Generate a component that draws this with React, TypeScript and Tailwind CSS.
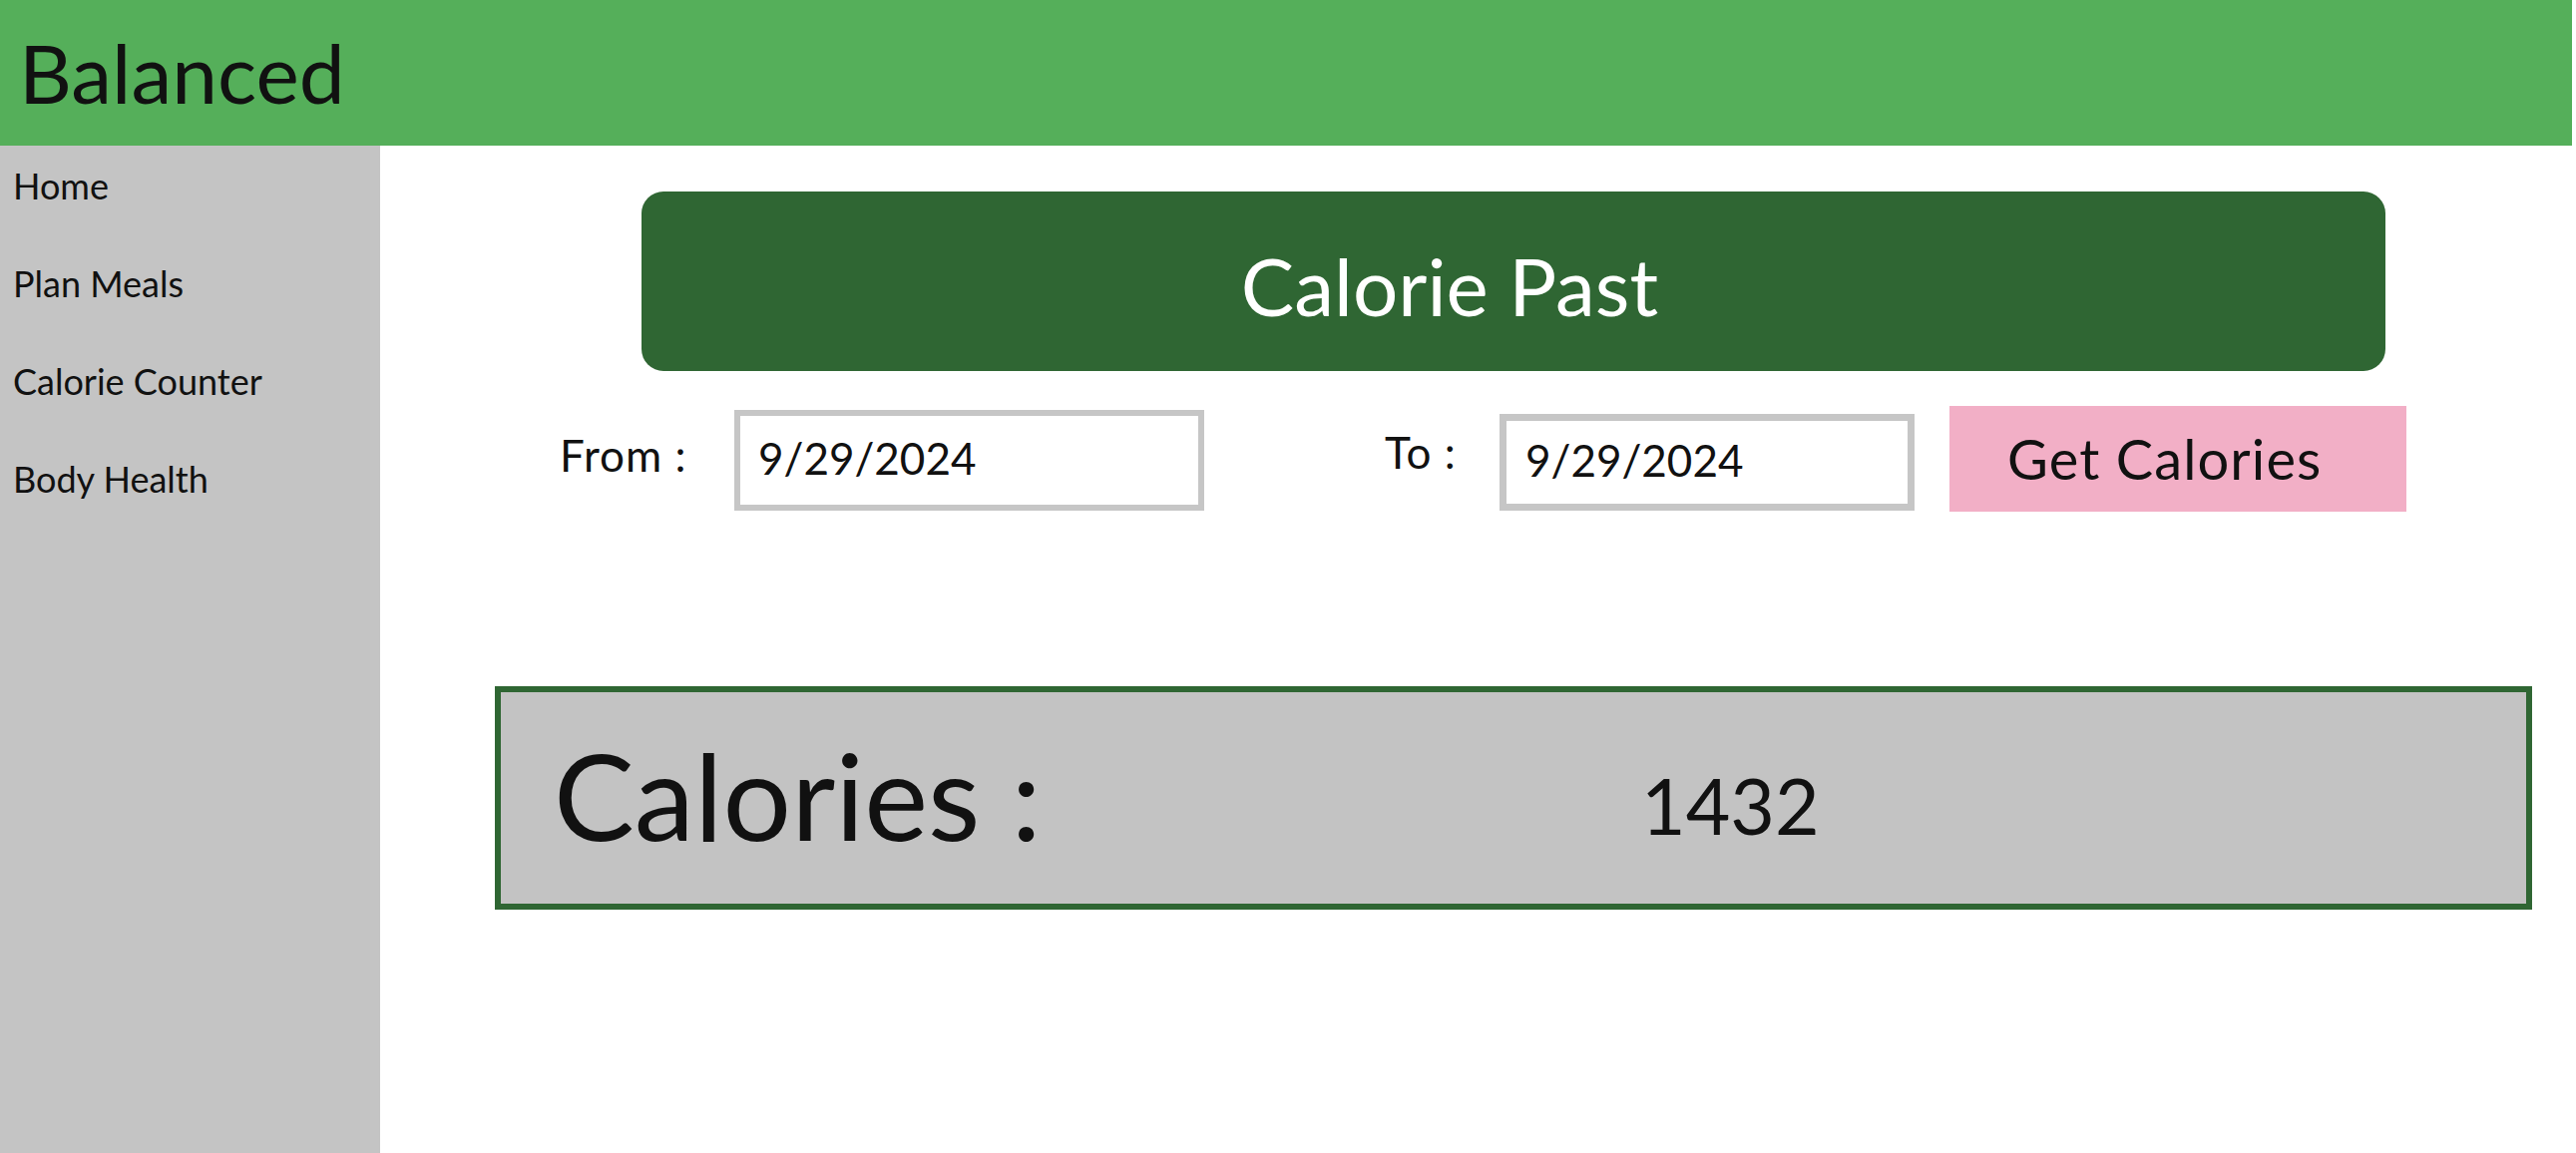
import React from "react";

const font = { fontFamily: "Lato, 'Noto Sans', sans-serif" };

export default function App() {
  return (
    <div
      className="w-[2582px] h-[1156px] bg-white flex flex-col overflow-hidden text-[#111]"
      style={font}
    >
      <header className="h-[146px] w-[2578px] bg-[#55af5a] flex items-start pt-[31px] pl-[19px]">
        <span className="text-[82px] leading-none">Balanced</span>
      </header>
      <div className="flex flex-1">
        <nav className="w-[381px] bg-[#c4c4c4] flex flex-col gap-[58px] pt-[20px] pl-[13px]">
          <span className="text-[36px] leading-[40px]">Home</span>
          <span className="text-[36px] leading-[40px]">Plan Meals</span>
          <span className="text-[36px] leading-[40px]">Calorie Counter</span>
          <span className="text-[36px] leading-[40px]">Body Health</span>
        </nav>
        <main className="flex-1 flex flex-col">
          <div className="ml-[262px] mt-[46px] w-[1748px] h-[180px] rounded-[22px] bg-[#2f6633] flex items-center justify-center pr-[128px] pt-[8px]">
            <span className="text-white text-[80px] leading-none">Calorie Past</span>
          </div>
          <div className="mt-[35px] h-[106px] flex items-start pl-[180px]">
            <span className="w-[175px] mt-[27px] text-[44px] leading-none tracking-[1px]">From :</span>
            <div className="w-[471px] h-[101px] mt-[4px] border-[6px] border-[#c6c6c6] bg-white pl-[18px] pt-[20px]">
              <span className="text-[44px] leading-none">9/29/2024</span>
            </div>
            <span className="ml-[181px] w-[115px] mt-[24px] text-[44px] leading-none tracking-[1px]">To :</span>
            <div className="w-[416px] h-[97px] mt-[8px] border-[7px] border-[#c6c6c6] bg-white pl-[19px] pt-[17px]">
              <span className="text-[44px] leading-none">9/29/2024</span>
            </div>
            <div className="ml-[35px] w-[458px] h-[106px] bg-[#f2afc6] flex items-center pl-[58px]">
              <span className="text-[56px] leading-none tracking-[1.1px]">Get Calories</span>
            </div>
          </div>
          <div className="mt-[175px] ml-[115px] w-[2042px] h-[224px] border-[6px] border-[#2f6633] bg-[#c3c3c3] flex items-start pl-[53px]">
            <span className="w-[1090px] mt-[42px] text-[121px] leading-none">Calories :</span>
            <span className="mt-[75px] text-[77px] leading-none">1432</span>
          </div>
        </main>
      </div>
    </div>
  );
}
